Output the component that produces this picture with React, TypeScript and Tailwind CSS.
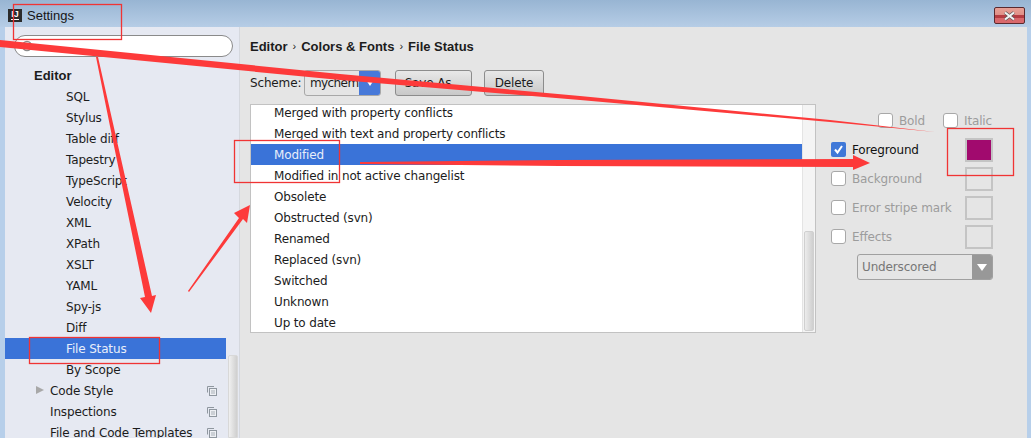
const treeRows = [
  "SQL",
  "Stylus",
  "Table diff",
  "Tapestry",
  "TypeScript",
  "Velocity",
  "XML",
  "XPath",
  "XSLT",
  "YAML",
  "Spy-js",
  "Diff",
];

const statusRows = [
  "Merged with property conflicts",
  "Merged with text and property conflicts",
  "Modified",
  "Modified in not active changelist",
  "Obsolete",
  "Obstructed (svn)",
  "Renamed",
  "Replaced (svn)",
  "Switched",
  "Unknown",
  "Up to date",
];

function CopyIcon() {
  return (
    <svg width="10" height="10" viewBox="0 0 10 10" className="absolute left-[202px] top-[6px]">
      <path d="M0.5 6.5V0.5H7" fill="none" stroke="#8f979f" />
      <rect x="2.5" y="2.5" width="7" height="7" fill="#eef0f4" stroke="#8f979f" />
      <path d="M4 5H8M4 7H8" stroke="#a9b0b7" />
    </svg>
  );
}

function Check({ checked, disabled }: { checked?: boolean; disabled?: boolean }) {
  if (checked) {
    return (
      <span className="flex h-[15px] w-[15px] shrink-0 items-center justify-center rounded-[2px] bg-[#3f78d8]">
        <svg width="11" height="11" viewBox="0 0 11 11">
          <path d="M2 5.5L4.5 8.5L9 2" fill="none" stroke="#fff" strokeWidth="2" />
        </svg>
      </span>
    );
  }
  return (
    <span
      className={`h-[15px] w-[15px] shrink-0 rounded-[3px] border bg-white ${
        disabled ? "border-[#a8a8a8]" : "border-[#888]"
      }`}
    />
  );
}

function EffectRow({ label, checked, className }: { label: string; checked?: boolean; className?: string }) {
  return (
    <div className={`flex h-[29px] items-center ${className ?? ""}`}>
      <Check checked={checked} disabled={!checked} />
      <span className={`ml-[6px] ${checked ? "text-[#111]" : "text-[#9c9c9c]"}`}>{label}</span>
      <span
        className={`ml-auto h-[24px] w-[28px] border-2 border-[#c4c4c4] ${checked ? "bg-[#a10a6e]" : ""}`}
      />
    </div>
  );
}

function Annotations() {
  return (
    <svg width="1031" height="438" viewBox="0 0 1031 438" className="pointer-events-none absolute left-0 top-0">
      <g fill="#fd3a3a">
        <polygon points="0,40 0,47 340,80 580,100 830,122 935,132 830,120 580,96 340,74" />
        <polygon points="96,57 98,57 152,296 156,295 151,313 140,298 145,297 114,146" />
        <polygon points="188,291 239,218 234,213 250,205 247,223 243,219 189,292" />
        <polygon points="360,162 560,160 853,159 853,155 870,163 853,170 853,167 560,166 360,164" />
      </g>
      <g fill="none" stroke="#f03434" strokeWidth="1.3">
        <rect x="13.5" y="4.5" width="108" height="35" />
        <rect x="234.5" y="140.5" width="105" height="42" />
        <rect x="29.5" y="337.5" width="130" height="26" />
        <rect x="947.5" y="128.5" width="66" height="47" />
      </g>
    </svg>
  );
}

export default function App() {
  return (
    <div className="relative flex h-[438px] w-[1031px] flex-col overflow-hidden bg-[#b7cfea] font-['DejaVu_Sans',sans-serif] text-[12px] leading-none tracking-[-0.15px] text-[#1c1c1c]">
      {/* title bar */}
      <div className="flex h-[27px] shrink-0 items-center bg-gradient-to-b from-[#98b5d3] to-[#b6cde6] pl-[8px] pr-[6px] pt-[4px]">
        <span className="flex h-[13px] w-[14px] flex-col items-center bg-[#2b2b2b] pt-[1px] font-['Liberation_Sans',sans-serif] text-[9px] font-bold leading-[8px] tracking-normal text-white">
          IJ
          <span className="mt-[1px] h-[1px] w-[8px] bg-white" />
        </span>
        <span className="ml-[5px] font-['Liberation_Sans',sans-serif] text-[13px] tracking-normal text-[#161616]">Settings</span>
        <span className="ml-auto flex h-[17px] w-[31px] items-center justify-center rounded-[2px] border border-[#5a2a2e] bg-[linear-gradient(#e8a095_0%,#e09088_45%,#b53c42_46%,#b53c42_65%,#d9686c_66%,#d9686c_100%)]">
          <svg width="13" height="10" viewBox="0 0 13 10">
            <path d="M2 1.5L11 8.5M11 1.5L2 8.5" stroke="#555" strokeWidth="3.4" />
            <path d="M2 1.5L11 8.5M11 1.5L2 8.5" stroke="#f4f4f4" strokeWidth="2.2" />
          </svg>
        </span>
      </div>

      <div className="flex min-h-0 flex-1 pl-[5px] pr-[4px]">
        {/* sidebar */}
        <div className="relative w-[235px] shrink-0 overflow-hidden border-r border-[#d5d8de] bg-[#e6e9f2]">
          <div className="ml-[9px] mt-[8px] flex h-[22px] w-[219px] items-center rounded-full border border-[#8a8a8a] bg-white pl-[6px]">
            <svg width="13" height="13" viewBox="0 0 13 13">
              <circle cx="6" cy="6" r="4.5" fill="none" stroke="#8a8a8a" strokeWidth="1.3" />
            </svg>
          </div>
          <div className="mt-[8px]">
            <div className="flex h-[21px] items-center pl-[29px] font-['Liberation_Sans',sans-serif] text-[13px] font-bold tracking-normal">
              Editor
            </div>
            {treeRows.map((row) => (
              <div key={row} className="flex h-[21px] items-center pl-[61px]">
                {row}
              </div>
            ))}
            <div className="flex h-[21px] w-[221px] items-center bg-[#3a73d8] pl-[61px] text-[#e8eefa]">
              File Status
            </div>
            <div className="flex h-[21px] items-center pl-[61px]">By Scope</div>
            <div className="relative flex h-[21px] items-center pl-[45px]">
              <span className="absolute left-[31px] top-[6px] h-0 w-0 border-y-[4.5px] border-l-[8px] border-y-transparent border-l-[#a8a8a8]" />
              Code Style
              <CopyIcon />
            </div>
            <div className="relative flex h-[21px] items-center pl-[45px]">
              Inspections
              <CopyIcon />
            </div>
            <div className="relative flex h-[21px] items-center pl-[45px]">
              File and Code Templates
              <CopyIcon />
            </div>
          </div>
          <div className="absolute bottom-0 left-[223px] top-[328px] w-[10px] rounded-t-[2px] border border-[#d8d8d8] bg-gradient-to-r from-[#f0f0f0] to-[#cfcfcf]" />
        </div>

        {/* main panel */}
        <div className="min-w-0 flex-1 bg-[#e5e5e5] pl-[10px] pt-[13px]">
          <div className="flex h-[13px] items-center font-['Liberation_Sans',sans-serif] text-[13px] font-bold tracking-normal">
            Editor
            <span className="mx-[5px] text-[11px] font-normal">›</span>
            Colors &amp; Fonts
            <span className="mx-[5px] text-[11px] font-normal">›</span>
            File Status
          </div>

          <div className="mt-[17px] flex items-center">
            <span className="w-[54px]">Scheme:</span>
            <div className="flex h-[26px] w-[77px] overflow-hidden rounded-[3px] border border-[#a8a8a8]">
              <span className="flex flex-1 items-center pl-[5px] tracking-[-0.6px]">mychem</span>
              <span className="flex w-[21px] items-center justify-center bg-[#4779d9]">
                <span className="h-0 w-0 border-x-[4px] border-t-[6px] border-x-transparent border-t-white" />
              </span>
            </div>
            <button className="ml-[14px] h-[26px] w-[77px] rounded-[3px] border border-[#8c8c8c] bg-gradient-to-b from-[#e8e8e8] to-[#c8c8c8]">
              Save As...
            </button>
            <button className="ml-[12px] h-[26px] w-[60px] rounded-[3px] border border-[#8c8c8c] bg-gradient-to-b from-[#e8e8e8] to-[#c8c8c8]">
              Delete
            </button>
          </div>

          <div className="mt-[8px] flex">
            {/* status list, first row is scrolled a little out of view */}
            <div className="flex h-[229px] w-[566px] shrink-0 overflow-hidden border border-[#c2c2c2] bg-white">
              <div className="-mt-[3px] min-w-0 flex-1">
                {statusRows.map((row) => (
                  <div
                    key={row}
                    className={`flex h-[21px] items-center pl-[23px] ${
                      row === "Modified" ? "bg-[#3a73d8] text-[#e8eefa]" : ""
                    }`}
                  >
                    {row}
                  </div>
                ))}
              </div>
              <div className="relative w-[13px] shrink-0 border-l border-[#e4e4e4] bg-[#f4f4f4]">
                <div className="absolute bottom-[1px] left-[1px] top-[126px] w-[10px] rounded-[2px] border border-[#d0d0d0] bg-gradient-to-r from-[#ececec] to-[#cfcfcf]" />
              </div>
            </div>

            {/* font effects */}
            <div className="ml-[15px] w-[162px] shrink-0">
              <div className="ml-[47px] mt-[9px] flex h-[15px] items-center text-[#9c9c9c]">
                <Check disabled />
                <span className="ml-[6px] w-[44px]">Bold</span>
                <Check disabled />
                <span className="ml-[6px]">Italic</span>
              </div>
              <EffectRow label="Foreground" checked className="mt-[7px]" />
              <EffectRow label="Background" />
              <EffectRow label="Error stripe mark" />
              <EffectRow label="Effects" />
              <div className="ml-[26px] mt-[3px] flex h-[26px] overflow-hidden rounded-[3px] border border-[#a0a0a0] text-[#777]">
                <span className="flex flex-1 items-center pl-[4px]">Underscored</span>
                <span className="flex w-[20px] items-center justify-center bg-[#989898]">
                  <span className="h-0 w-0 border-x-[5px] border-t-[7px] border-x-transparent border-t-white" />
                </span>
              </div>
            </div>
          </div>
        </div>
      </div>

      <Annotations />
    </div>
  );
}
